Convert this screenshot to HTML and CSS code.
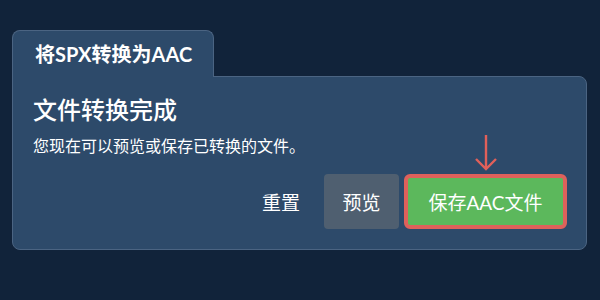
FILE: index.html
```html
<!DOCTYPE html>
<html lang="zh-CN">
  <head>
    <meta charset="UTF-8" />
    <meta name="viewport" content="width=device-width, initial-scale=1.0" />
    <title>SPX转AAC</title>
    <link rel="stylesheet" href="styles.css">
  </head>
  <body>
    <div class="panel">
      <div class="tab">将SPX转换为AAC</div>
      <div class="card">
        <h2 class="card-title">文件转换完成</h2>
        <p class="card-text">您现在可以预览或保存已转换的文件。</p>
        <div class="actions">
          <button class="reset-button">重置</button>
          <button class="preview-button">预览</button>
          <div class="save-wrap">
            <!-- hint arrow over the save button -->
            <svg class="hint-arrow" width="30" height="38" viewBox="0 0 30 38">
              <path d="M15 1 V35 M5 25 L15 35 L25 25" fill="none" stroke="#e0605a" stroke-width="2.4" />
            </svg>
            <button class="save-button">保存AAC文件</button>
          </div>
        </div>
      </div>
    </div>
  </body>
</html>
```

FILE: styles.css
```css
body {
  margin: 0;
  font-family: Lato, "Noto Sans CJK SC", sans-serif;
  background-color: #11233a;
  color: #fff;
}

.panel {
  padding: 30px 13px 0 12px;
}

.tab {
  display: inline-block;
  position: relative;
  z-index: 1;
  background-color: #2d4a6a;
  border: 1px solid #4b6482;
  border-bottom: none;
  border-radius: 8px 8px 0 0;
  padding: 0 21px 0 22px;
  height: 46px;
  line-height: 46px;
  font-size: 20px;
  font-weight: bold;
  margin-bottom: -1px;
}

.card {
  background-color: #2d4a6a;
  border: 1px solid #4b6482;
  border-radius: 0 8px 8px 8px;
  padding: 18px 19px 20px 20px;
}

.card-title {
  margin: 0;
  font-size: 24px;
  line-height: 30px;
  font-weight: 500;
}

.card-text {
  margin: 10px 0 0;
  font-size: 16px;
  line-height: 22px;
}

.actions {
  display: flex;
  justify-content: flex-end;
  align-items: center;
  gap: 5px;
  margin-top: 17px;
}

button {
  font-family: inherit;
  font-size: 19px;
  color: #fff;
  border: none;
  cursor: pointer;
}

.reset-button {
  background: none;
  padding: 0 19px;
  height: 55px;
}

.preview-button {
  background-color: #4f5f70;
  border-radius: 4px;
  height: 55px;
  width: 75px;
  padding: 0;
}

.save-wrap {
  position: relative;
}

.hint-arrow {
  position: absolute;
  left: 50%;
  bottom: 100%;
  margin-left: -15px;
  margin-bottom: 2px;
}

.save-button {
  display: block;
  background-color: #5cb85c;
  border: 4px solid #de615b;
  border-radius: 6px;
  height: 55px;
  width: 163px;
  padding: 0;
}
```
